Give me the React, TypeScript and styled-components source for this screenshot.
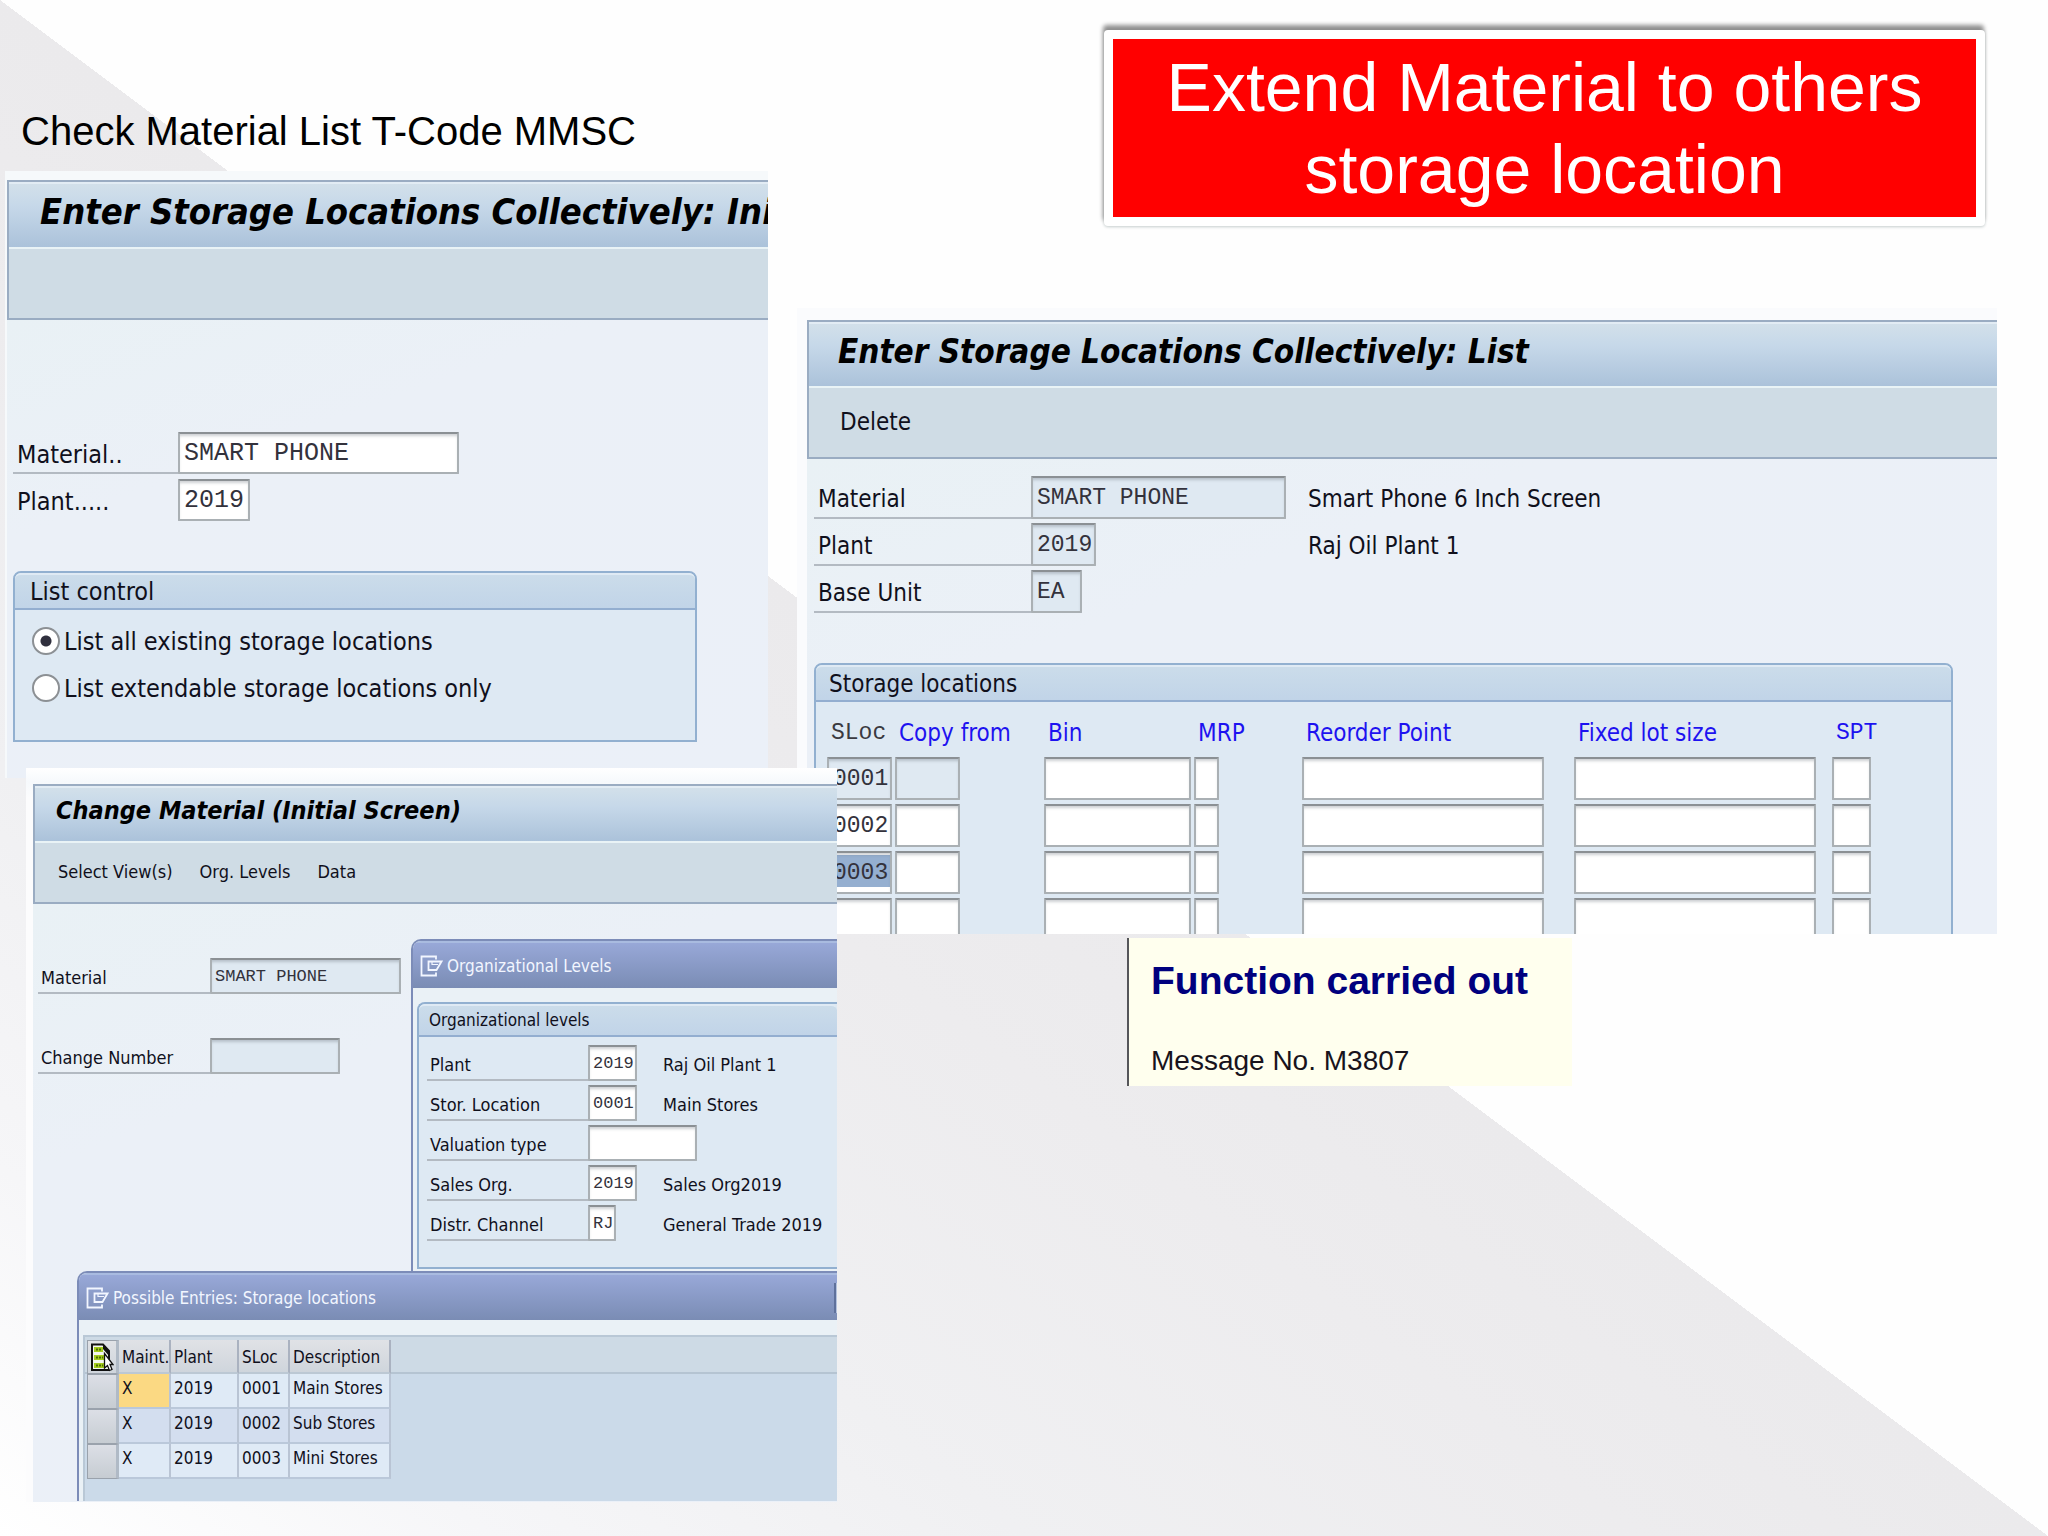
import React from "react";
import styled, { createGlobalStyle } from "styled-components";

const GlobalStyle = createGlobalStyle`
  *, *::before, *::after { box-sizing: border-box; }
  body { margin: 0; }
`;

const SANS = `"Liberation Sans", Arial, sans-serif`;
const SAP = `"DejaVu Sans Condensed", "DejaVu Sans", Tahoma, sans-serif`;
const MONO = `"Liberation Mono", "Courier New", monospace`;

/* The slide is one grid whose areas overlap, so the windows can lie over each other. */
const Slide = styled.main`
  display: grid;
  grid-template-columns: 5px 21px 742fr 29px 40px 290fr 445px 425fr 51px;
  grid-template-rows: 171px 137px 460px 10px 156px 4px 148px 416px;
  min-height: 100vh;
  overflow: hidden;
  font-family: ${SANS};
  background: linear-gradient(to top right, #ffffff 0%, #f6f6f8 12%, #f0f0f2 25%, #edecee 40%, #ebeaec 50%, #fefefe 50%);
`;

const Heading = styled.h1`
  grid-area: 1 / 2 / 2 / 6;
  align-self: end;
  margin: 0 0 16px 16px;
  font-size: 40px;
  line-height: 48px;
  font-weight: 400;
  color: #000;
`;

const Banner = styled.h2`
  grid-area: 1 / 6 / 2 / 9;
  align-self: start;
  justify-self: end;
  width: 881px;
  max-width: 100%;
  margin: 30px 12px 0 0;
  padding: 7px 24px;
  border: 9px solid #fff;
  border-radius: 4px;
  background: #ff0000;
  box-shadow: -1px -5px 4px #8f8f8f, 0 1px 3px #c4cccc;
  color: #fff;
  font-size: 68px;
  line-height: 82px;
  font-weight: 400;
  text-align: center;
`;

const Window = styled.section<{
  $area: string;
  $text: number;
  $mono: number;
  $field: number;
  $inset: number;
  $pad: string;
  $edge: string;
}>`
  --mono: ${p => p.$mono}px;
  --field: ${p => p.$field}px;
  --inset: ${p => p.$inset}px;
  grid-area: ${p => p.$area};
  display: flex;
  flex-direction: column;
  min-width: 0;
  overflow: hidden;
  padding: ${p => p.$pad};
  background: ${p => p.$edge};
  font-family: ${SAP};
  font-size: ${p => p.$text}px;
  color: #10101c;
`;

const Frame = styled.div`
  border: 2px solid #9aacc2;
  border-right: 0;
  flex: none;
`;

const TitleBar = styled.h3<{ $size: number; $height: number; $left: number }>`
  height: ${p => p.$height}px;
  margin: 0;
  padding: 0 0 8px ${p => p.$left}px;
  display: flex;
  align-items: center;
  overflow: hidden;
  white-space: nowrap;
  border-top: 2px solid #e2ecf4;
  border-bottom: 2px solid #e9f3f6;
  background: linear-gradient(#d2e0ea, #c6d8e9 35%, #abc2da);
  color: #000;
  font-size: ${p => p.$size}px;
  line-height: 1;
  font-weight: 700;
  font-style: italic;
`;

const Toolbar = styled.div<{ $height: number; $gap: number; $left: number }>`
  height: ${p => p.$height}px;
  display: flex;
  align-items: center;
  gap: ${p => p.$gap}px;
  padding: 0 0 2px ${p => p.$left}px;
  background: #cfdce5;
`;

const ToolButton = styled.button<{ $size: number }>`
  padding: 0;
  border: 0;
  background: none;
  font-family: inherit;
  font-size: ${p => p.$size}px;
  color: #10101c;
`;

const Body = styled.div<{ $pad: string }>`
  flex: 1;
  min-height: 0;
  padding: ${p => p.$pad};
  background: linear-gradient(160deg, #e9f1f5, #ebf0f7 30%, #ebf0f8);
`;

const Rows = styled.div<{ $gap: number }>`
  display: flex;
  flex-direction: column;
  gap: ${p => p.$gap}px;
`;

const Row = styled.div`
  display: flex;
  height: var(--field);
`;

const Label = styled.label<{ $width: number; $plain?: boolean }>`
  width: ${p => p.$width}px;
  flex: none;
  display: flex;
  align-items: center;
  padding: 4px 0 0 var(--inset);
  white-space: nowrap;
  border-bottom: 2px solid ${p => (p.$plain ? "transparent" : "#b3bac2")};
`;

const Note = styled.span<{ $left: number }>`
  display: flex;
  align-items: center;
  margin-left: ${p => p.$left}px;
  padding-top: 2px;
  white-space: nowrap;
`;

const Input = styled.input<{ $width: number; $selected?: boolean }>`
  width: ${p => p.$width}px;
  height: var(--field);
  flex: none;
  display: block;
  margin: 0;
  padding: 3px 1px 2px var(--inset);
  border: 2px solid #aab0b4;
  border-top-color: #8b9094;
  border-radius: 1px;
  background: ${p => (p.$selected ? "linear-gradient(#95afd0, #95afd0) no-repeat 0 2px / 100% 32px #fff" : "#fff")};
  box-shadow: inset 0 3px 3px -1px rgba(90, 100, 110, 0.3);
  font-family: ${MONO};
  font-size: var(--mono);
  line-height: 1;
  color: #33323c;
  outline: none;
  &:read-only { background: #dfe9f2; }
`;

const Group = styled.fieldset<{ $pad: string; $height: number; $open?: boolean }>`
  min-width: 0;
  height: ${p => p.$height}px;
  margin: 0;
  padding: 0;
  border: 2px solid #92b0d0;
  border-radius: 8px 8px 0 0;
  ${p => p.$open && "border-right: 0; border-top-right-radius: 0;"}
  background: #dee9f3;
  > div { padding: ${p => p.$pad}; }
`;

const Legend = styled.legend<{ $height: number; $left: number; $size?: number }>`
  float: left;
  width: 100%;
  height: ${p => p.$height}px;
  padding: 0 0 0 ${p => p.$left}px;
  display: flex;
  align-items: center;
  border-top: 2px solid #dfeaf4;
  border-bottom: 2px solid #93aed0;
  border-radius: 6px 6px 0 0;
  background: linear-gradient(#cbdcea, #c1d4e8);
  ${p => p.$size && `font-size: ${p.$size}px;`}
  line-height: 1;
  white-space: nowrap;
`;

const GroupBody = styled.div`
  clear: both;
`;

const RadioLabel = styled.label`
  display: flex;
  align-items: center;
  gap: 4px;
  height: 42px;
  line-height: 1;
  white-space: nowrap;
`;

const Radio = styled.input`
  appearance: none;
  flex: none;
  width: 28px;
  height: 28px;
  margin: 0;
  border: 2px solid #8c9094;
  border-radius: 50%;
  background: #fff;
  &:checked { background: radial-gradient(circle, #30303e 5px, #fff 6px); }
`;

const Spaced = styled.div<{ $top: number; $right?: number }>`
  margin: ${p => p.$top}px ${p => p.$right || 0}px 0 0;
`;

const SlocTable = styled.table`
  table-layout: fixed;
  border-collapse: collapse;
  width: 1060px;
  th {
    height: 55px;
    padding: 7px 0 0 4px;
    text-align: left;
    font-weight: 400;
    color: #1d12f0;
    white-space: nowrap;
  }
  td { padding: 0 0 4px; vertical-align: top; }
`;

const MonoHead = styled.th<{ $dark?: boolean }>`
  font-family: ${MONO};
  font-size: var(--mono);
  && { color: ${p => (p.$dark ? "#3a3a40" : "#1d12f0")}; }
`;

const Columns = styled.div`
  display: grid;
  grid-template-columns: 378px 1fr;
`;

const Main = styled.div`
  height: 332px;
  padding: 19px 0 0 5px;
`;

const Lower = styled.div`
  margin-left: 44px;
`;

const Dialog = styled.section<{ $height: number }>`
  height: ${p => p.$height}px;
  overflow: hidden;
  border: 2px solid #7c8cb8;
  border-right: 0;
  border-bottom: 0;
  border-radius: 10px 0 0 0;
  background: #eaf1f6;
`;

const DialogTitle = styled.h4`
  height: 47px;
  margin: 0;
  padding: 0 0 0 7px;
  display: flex;
  align-items: center;
  gap: 4px;
  border-top: 2px solid #a9bbe0;
  background: linear-gradient(#98a8d8, #7a8cb4);
  color: #f2f6ff;
  font-size: 17px;
  font-weight: 400;
  white-space: nowrap;
`;

const DialogBody = styled.div`
  padding: 14px 0 0 4px;
`;

const CornerButton = styled.button`
  width: 3px;
  height: 30px;
  margin-left: auto;
  padding: 0;
  border: 0;
  border-left: 2px solid #5f719c;
  background: #b4c2dd;
`;

const GridPane = styled.div`
  height: 200px;
  margin: 15px 0 0 4px;
  padding: 3px 0 0 2px;
  border: 2px solid #b9c8d6;
  border-right: 0;
  background: linear-gradient(#cddae5 35px, #b5c4d2 35px, #b5c4d2 37px, #cbdae9 37px);
`;

const Entries = styled.table`
  border-collapse: separate;
  border-spacing: 0;
  table-layout: fixed;
  width: 304px;
  font-size: 17px;
  line-height: 1;
  th, td {
    padding: 0 0 0 3px;
    text-align: left;
    font-weight: 400;
    white-space: nowrap;
    border-right: 2px solid #b9c4d4;
  }
  th {
    height: 34px;
    padding-top: 3px;
    border-right-color: #aab2c0;
    border-bottom: 2px solid #bcc8d4;
    background: linear-gradient(#e0e2e6, #cfd5dc);
  }
  td { height: 35px; border-bottom: 2px solid #bac8da; padding-bottom: 4px; background: #dfeaf6; }
  tbody tr:nth-child(2) td { background: #d3deef; }
`;

const Handle = styled.td`
  ${Entries} tbody tr && {
    background: linear-gradient(#dcdfe6, #c6ccd2);
    border: 1px solid #9aa2ac;
    border-right: 3px solid #b0bac6;
  }
`;

const IconHead = styled.th`
  && { padding: 0; border: 1px solid #9aa2ac; border-right: 3px solid #b0bac6; }
  svg { display: block; margin: 0 auto; }
`;

const Current = styled.td`
  && { background: #fbd983; }
`;

const Message = styled.aside`
  grid-area: 6 / 7 / 8 / 8;
  margin-top: 4px;
  padding: 21px 0 0 22px;
  border-left: 2px solid #55565a;
  background: #ffffee;
  font-family: ${SANS};
`;

const MessageTitle = styled.h3`
  margin: 0;
  font-size: 39px;
  line-height: 44px;
  color: #00007e;
`;

const MessageText = styled.p`
  margin: 42px 0 0;
  font-size: 28px;
  line-height: 32px;
  color: #18131c;
`;

const DialogIcon = () => (
  <svg width="23" height="22" viewBox="0 0 23 22" fill="none" stroke="#f2f6ff" strokeWidth="1.8" aria-hidden="true">
    <path d="M16 4.5V1.5H1.5V20.5H16V17.5" />
    <path d="M8.5 15V6.5H21.5L16.5 15Z" />
    <path d="M12 6.5V9.5H18" strokeWidth="1.2" />
  </svg>
);

const SheetIcon = () => (
  <svg width="24" height="29" viewBox="0 0 24 29" aria-hidden="true">
    <path d="M2 1.5H13L19 8V27H2Z" fill="#f4f6ee" stroke="#101010" strokeWidth="2" />
    <path d="M13 1.5L19 8V13L13 6Z" fill="#101010" />
    <path d="M4 4H13V9H4ZM4 12H15V17H4ZM4 20H15V25H4Z" fill="#a4cc1c" />
    <path d="M6 6.5H12M6 14.5H13M6 22.5H13" stroke="#4d6a08" strokeWidth="2" strokeDasharray="2 1" />
    <path d="M14.5 10.5V25L17.5 22.5L19.5 27.5L22 26.5L20 21.5H23Z" fill="#fff" stroke="#101010" strokeWidth="1.3" />
  </svg>
);

const slocRows = [
  { id: "0001", locked: true },
  { id: "0002" },
  { id: "0003", selected: true },
  { id: "" },
];

const columns = [
  { name: "Bin", col: 150, input: 147 },
  { name: "MRP", col: 108, input: 25 },
  { name: "Reorder Point", col: 272, input: 242 },
  { name: "Fixed lot size", col: 258, input: 242 },
  { name: "SPT", col: 55, input: 39 },
];

const NOTE_START = 75;

const orgRows = [
  { label: "Plant", value: "2019", width: 49, note: "Raj Oil Plant 1" },
  { label: "Stor. Location", value: "0001", width: 49, note: "Main Stores" },
  { label: "Valuation type", value: "", width: 109, note: "" },
  { label: "Sales Org.", value: "2019", width: 49, note: "Sales Org2019" },
  { label: "Distr. Channel", value: "RJ", width: 28, note: "General Trade 2019" },
];

const entries = [
  ["X", "2019", "0001", "Main Stores"],
  ["X", "2019", "0002", "Sub Stores"],
  ["X", "2019", "0003", "Mini Stores"],
];

function InitialWindow() {
  return (
    <Window
      $area="1 / 2 / 5 / 4"
      $text={25}
      $mono={25}
      $field={42}
      $inset={4}
      $pad="180px 0 0 2px"
      $edge="linear-gradient(#f6f9fb, #f6f9fb) no-repeat 0 171px / 100% 700px"
    >
      <Frame>
        <TitleBar $size={36} $height={67} $left={31}>Enter Storage Locations Collectively: Ini</TitleBar>
        <Toolbar $height={69} $gap={0} $left={31} />
      </Frame>
      <Body $pad="112px 8px 0 6px">
        <Rows $gap={5}>
          <Row>
            <Label htmlFor="m1" $width={165}>Material..</Label>
            <Input id="m1" $width={281} defaultValue="SMART PHONE" />
          </Row>
          <Row>
            <Label htmlFor="p1" $width={165} $plain>Plant.....</Label>
            <Input id="p1" $width={72} defaultValue="2019" />
          </Row>
        </Rows>
        <Spaced $top={50} $right={63}>
          <Group $pad="10px 17px" $height={171}>
            <Legend $height={37} $left={15}>List control</Legend>
            <GroupBody>
              <Rows $gap={5}>
                <RadioLabel><Radio type="radio" name="list" defaultChecked /><span>List all existing storage locations</span></RadioLabel>
                <RadioLabel><Radio type="radio" name="list" /><span>List extendable storage locations only</span></RadioLabel>
              </Rows>
            </GroupBody>
          </Group>
        </Spaced>
      </Body>
    </Window>
  );
}

function ListWindow() {
  return (
    <Window $area="3 / 5 / 6 / 9" $text={24} $mono={23} $field={43} $inset={4} $pad="12px 0 0 10px" $edge="#fafbfd">
      <Frame>
        <TitleBar $size={33} $height={66} $left={29}>Enter Storage Locations Collectively: List</TitleBar>
        <Toolbar $height={69} $gap={0} $left={31}>
          <ToolButton type="button" $size={24}>Delete</ToolButton>
        </Toolbar>
      </Frame>
      <Body $pad="17px 44px 0 7px">
        <Rows $gap={4}>
          <Row>
            <Label htmlFor="m2" $width={217}>Material</Label>
            <Input id="m2" $width={255} readOnly value="SMART PHONE" />
            <Note $left={22}>Smart Phone 6 Inch Screen</Note>
          </Row>
          <Row>
            <Label htmlFor="p2" $width={217}>Plant</Label>
            <Input id="p2" $width={65} readOnly value="2019" />
            <Note $left={212}>Raj Oil Plant 1</Note>
          </Row>
          <Row>
            <Label htmlFor="u2" $width={217}>Base Unit</Label>
            <Input id="u2" $width={51} readOnly value="EA" />
          </Row>
        </Rows>
        <Spaced $top={50}>
          <Group $pad="0 0 0 11px" $height={400}>
            <Legend $height={37} $left={13}>Storage locations</Legend>
            <GroupBody>
              <SlocTable>
                <colgroup>
                  <col width={68} />
                  <col width={149} />
                  {columns.map(c => <col key={c.name} width={c.col} />)}
                </colgroup>
                <thead>
                  <tr>
                    <MonoHead $dark>SLoc</MonoHead>
                    <th>Copy from</th>
                    {columns.map(c => (c.name === "SPT" ? <MonoHead key={c.name}>{c.name}</MonoHead> : <th key={c.name}>{c.name}</th>))}
                  </tr>
                </thead>
                <tbody>
                  {slocRows.map((r, i) => (
                    <tr key={i}>
                      <td><Input aria-label="SLoc" $width={65} $selected={r.selected} readOnly={r.locked} defaultValue={r.id} /></td>
                      <td><Input aria-label="Copy from" $width={65} readOnly={r.locked} /></td>
                      {columns.map(c => (
                        <td key={c.name}><Input aria-label={c.name} $width={c.input} /></td>
                      ))}
                    </tr>
                  ))}
                </tbody>
              </SlocTable>
            </GroupBody>
          </Group>
        </Spaced>
      </Body>
    </Window>
  );
}

function ChangeWindow() {
  return (
    <Window
      $area="4 / 3 / 9 / 6"
      $text={18}
      $mono={17}
      $field={36}
      $inset={3}
      $pad="16px 0 0 7px"
      $edge="linear-gradient(#ffffff, #f6f9fc 14px, #fcfcfd 30px)"
    >
      <Frame>
        <TitleBar $size={25} $height={57} $left={21}>Change Material (Initial Screen)</TitleBar>
        <Toolbar $height={59} $gap={27} $left={23}>
          <ToolButton type="button" $size={18}>Select View(s)</ToolButton>
          <ToolButton type="button" $size={18}>Org. Levels</ToolButton>
          <ToolButton type="button" $size={18}>Data</ToolButton>
        </Toolbar>
      </Frame>
      <Body $pad="35px 0 0 0">
        <Columns>
          <Main>
            <Rows $gap={44}>
              <Row>
                <Label htmlFor="m3" $width={172}>Material</Label>
                <Input id="m3" $width={191} readOnly value="SMART PHONE" />
              </Row>
              <Row>
                <Label htmlFor="c3" $width={172}>Change Number</Label>
                <Input id="c3" $width={130} readOnly value="" />
              </Row>
            </Rows>
          </Main>
          <Dialog $height={332}>
            <DialogTitle><DialogIcon />Organizational Levels</DialogTitle>
            <DialogBody>
              <Group $pad="8px 0 0 8px" $height={267} $open>
                <Legend $height={33} $left={10} $size={17}>Organizational levels</Legend>
                <GroupBody>
                  <Rows $gap={4}>
                    {orgRows.map((r, i) => (
                      <Row key={r.label}>
                        <Label htmlFor={"o" + i} $width={161}>{r.label}</Label>
                        <Input id={"o" + i} $width={r.width} defaultValue={r.value} />
                        {r.note && <Note $left={NOTE_START - r.width}>{r.note}</Note>}
                      </Row>
                    ))}
                  </Rows>
                </GroupBody>
              </Group>
            </DialogBody>
          </Dialog>
        </Columns>
        <Lower>
          <Dialog $height={230}>
            <DialogTitle><DialogIcon />Possible Entries: Storage locations<CornerButton type="button" aria-label="Close" /></DialogTitle>
            <GridPane>
              <Entries>
                <colgroup>
                  <col width={32} />
                  <col width={52} />
                  <col width={68} />
                  <col width={51} />
                  <col width={101} />
                </colgroup>
                <thead>
                  <tr>
                    <IconHead><SheetIcon /></IconHead>
                    <th>Maint.</th>
                    <th>Plant</th>
                    <th>SLoc</th>
                    <th>Description</th>
                  </tr>
                </thead>
                <tbody>
                  {entries.map((e, i) => (
                    <tr key={e[2]}>
                      <Handle />
                      {i === 0 ? <Current>{e[0]}</Current> : <td>{e[0]}</td>}
                      <td>{e[1]}</td>
                      <td>{e[2]}</td>
                      <td>{e[3]}</td>
                    </tr>
                  ))}
                </tbody>
              </Entries>
            </GridPane>
          </Dialog>
        </Lower>
      </Body>
    </Window>
  );
}

export default function App() {
  return (
    <>
      <GlobalStyle />
      <Slide>
        <InitialWindow />
        <Heading>Check Material List T-Code MMSC</Heading>
        <Banner>Extend Material to others storage location</Banner>
        <ListWindow />
        <ChangeWindow />
        <Message>
          <MessageTitle>Function carried out</MessageTitle>
          <MessageText>Message No. M3807</MessageText>
        </Message>
      </Slide>
    </>
  );
}
